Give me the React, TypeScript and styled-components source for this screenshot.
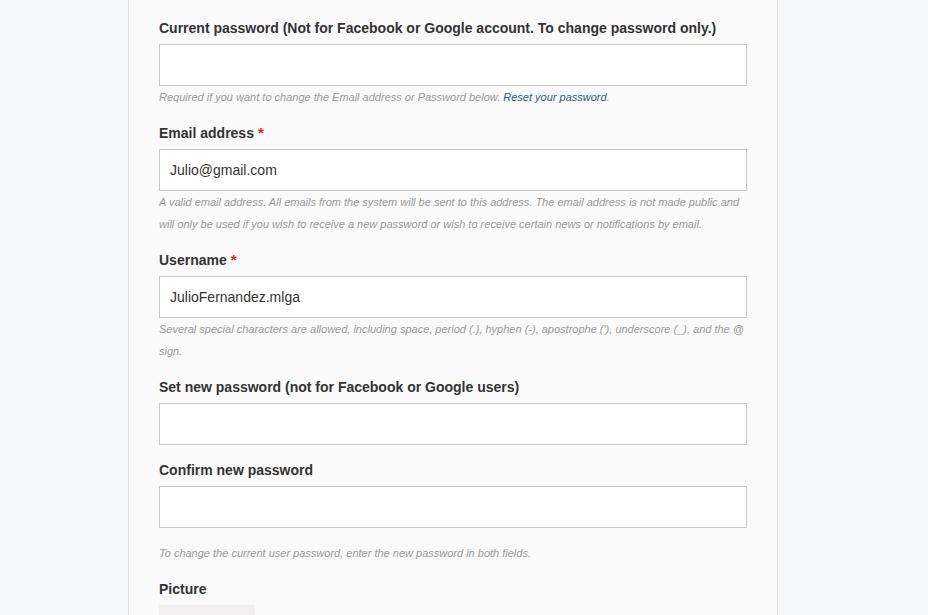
import React from "react";
import styled, { createGlobalStyle } from "styled-components";

const Global = createGlobalStyle`
  html, body { margin: 0; padding: 0; background: #f6f7f9; }
  body { font-family: "Liberation Sans", Arial, sans-serif; }
  * { box-sizing: border-box; }
`;

const Page = styled.div`
  display: flex;
  min-height: 615px;
  padding-left: 128px;
  overflow: hidden;
  height: 615px;
`;

const Panel = styled.div`
  width: 650px;
  background: #fafafa;
  border-left: 1px solid #e2e2e2;
  border-right: 1px solid #e2e2e2;
  padding: 18px 30px 0 30px;
  display: flex;
  flex-direction: column;
`;

const Item = styled.div`
  display: flex;
  flex-direction: column;
  margin-bottom: 15px;
`;

const Label = styled.label`
  font-size: 14px;
  font-weight: bold;
  line-height: 20px;
  color: #333;
  margin-bottom: 6px;
`;

const Req = styled.span`
  color: #e0242a;
  margin-left: 4px;
  font-size: 15px;
`;

const Input = styled.input`
  width: 588px;
  height: 42px;
  border: 1px solid #c8c8c8;
  background: #fff;
  padding: 0 10px;
  font-family: "Liberation Sans", Arial, sans-serif;
  font-size: 14px;
  color: #333;
  outline: none;
`;

const Help = styled.div<{ $gap?: number }>`
  font-size: 11px;
  font-style: italic;
  line-height: 22px;
  color: #999;
  margin-top: ${(p) => p.$gap ?? 0}px;
  width: 588px;
`;

const Link = styled.a`
  color: #1f5f8e;
  text-decoration: none;
`;

const PictureBox = styled.div`
  width: 96px;
  height: 40px;
  background: #f3eeef;
`;

export default function App() {
  return (
    <>
      <Global />
      <Page>
        <Panel>
          <Item>
            <Label>Current password (Not for Facebook or Google account. To change password only.)</Label>
            <Input type="password" />
            <Help>
              Required if you want to change the Email address or Password below.{" "}
              <Link href="#">Reset your password</Link>.
            </Help>
          </Item>
          <Item>
            <Label>
              Email address<Req>*</Req>
            </Label>
            <Input defaultValue="Julio@gmail.com" />
            <Help>
              A valid email address. All emails from the system will be sent to this address. The email address is not made public and will only be used if you wish to receive a new password or wish to receive certain news or notifications by email.
            </Help>
          </Item>
          <Item>
            <Label>
              Username<Req>*</Req>
            </Label>
            <Input defaultValue="JulioFernandez.mlga" />
            <Help>
              Several special characters are allowed, including space, period (.), hyphen (-), apostrophe ('), underscore (_), and the @ sign.
            </Help>
          </Item>
          <Item>
            <Label>Set new password (not for Facebook or Google users)</Label>
            <Input type="password" />
          </Item>
          <Item>
            <Label>Confirm new password</Label>
            <Input type="password" />
            <Help $gap={14}>To change the current user password, enter the new password in both fields.</Help>
          </Item>
          <Item>
            <Label>Picture</Label>
            <PictureBox />
          </Item>
        </Panel>
      </Page>
    </>
  );
}
